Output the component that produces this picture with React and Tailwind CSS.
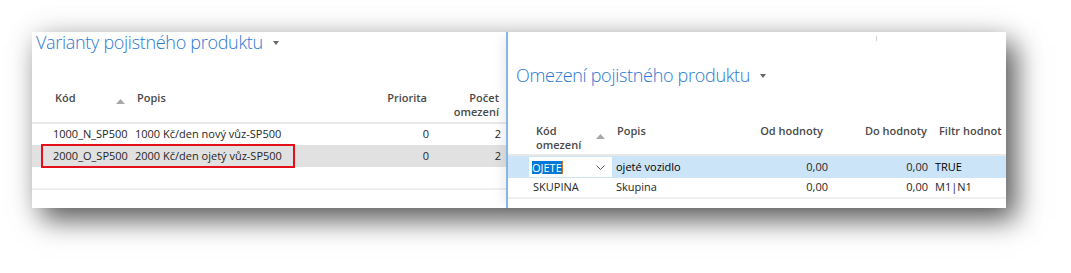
import React from "react";

const TEXT = "font-['Open_Sans','Noto_Sans',sans-serif]";

function Caret() {
  return (
    <svg width="6" height="4" viewBox="0 0 6 4" className="ml-[10px] mt-[2px]">
      <path d="M0 0 L6 0 L3 4 Z" fill="#666" />
    </svg>
  );
}

function SortUp() {
  return (
    <svg width="9" height="5" viewBox="0 0 9 5">
      <path d="M0 5 L4.5 0 L9 5 Z" fill="#a8a8a8" />
    </svg>
  );
}

function Chevron() {
  return (
    <svg width="9" height="5" viewBox="0 0 9 5">
      <path d="M0.5 0.5 L4.5 4.5 L8.5 0.5" fill="none" stroke="#555" strokeWidth="1" />
    </svg>
  );
}

const variants = [
  { code: "1000_N_SP500", desc: "1000 Kč/den nový vůz-SP500", priority: 0, count: 2 },
  { code: "2000_O_SP500", desc: "2000 Kč/den ojetý vůz-SP500", priority: 0, count: 2, selected: true },
];

function VariantsPanel() {
  return (
    <section className="w-[474px] flex flex-col">
      <div className="h-[20px] pl-1 flex items-center">
        <h1 className="text-[18px] leading-[20px] font-light tracking-[-0.3px] text-[#2a79d1]">Varianty pojistného produktu</h1>
        <Caret />
      </div>

      {/* column headings */}
      <div className="mt-[39px] pl-[21px] pb-[3px] flex text-[11px] leading-[14px] font-semibold text-[#4a4a4a] border-b-2 border-[#e8e8e8]">
        <div className="w-[82px] pl-[2px] pr-[10px] flex justify-between">
          <span>Kód</span>
          <span className="mt-[8px]"><SortUp /></span>
        </div>
        <div className="w-[186px] pl-[2px]">Popis</div>
        <div className="w-[108px] pr-[2px] text-right">Priorita</div>
        <div className="w-[72px] pr-[2px] text-right">
          Počet<br />omezení
        </div>
      </div>

      {variants.map((v, i) => (
        <div
          key={v.code}
          className={
            "pl-[21px] flex items-center text-[11px] text-[#262626] " +
            (i === 0 ? "h-[21px] " : "h-[22px] ") +
            (v.selected ? "bg-[#e1e1e1]" : "bg-white")
          }
        >
          <div className="w-[82px]">{v.code}</div>
          <div className="w-[186px]">{v.desc}</div>
          <div className="w-[108px] text-right">{v.priority}</div>
          <div className="w-[72px] text-right">{v.count}</div>
        </div>
      ))}
      <div className="h-[23px] border-b-2 border-[#efefef]" />
    </section>
  );
}

function LimitsPanel() {
  return (
    <section className="relative flex-1 flex flex-col bg-white border-l-2 border-[#86b6e4] shadow-[-8px_0_10px_-4px_rgba(0,0,0,0.07)]">
      <span className="absolute left-[368px] top-[4px] w-px h-[5px] bg-[#cfcfcf]" />
      <div className="mt-[33px] h-[20px] pl-2 flex items-center">
        <h2 className="text-[18px] leading-[20px] font-light tracking-[-0.3px] text-[#2a79d1]">Omezení pojistného produktu</h2>
        <Caret />
      </div>

      <div className="mt-[39px] pl-[21px] pb-[2px] flex text-[11px] leading-[14px] font-semibold text-[#4a4a4a] border-b-2 border-[#e8e8e8]">
        <div className="w-[83px] pl-[7px] pr-[7px] flex justify-between">
          <span>
            Kód<br />omezení
          </span>
          <span className="mt-[10px]"><SortUp /></span>
        </div>
        <div className="w-[140px] pl-[5px]">Popis</div>
        <div className="w-[76px] pr-[5px] text-right">Od hodnoty</div>
        <div className="w-[100px] pr-px text-right">Do hodnoty</div>
        <div className="flex-1 pl-[11px]">Filtr hodnot</div>
      </div>

      <div className="h-[22px] pl-[21px] flex items-center text-[11px] text-[#262626] bg-[#cce4f7]">
        <div className="w-[83px] h-[20px] pl-[3px] pr-[7px] bg-white flex items-center justify-between">
          <span className="flex items-center">
            <span className="bg-[#0078d7] text-white leading-[13px]">OJETE</span>
            <span className="w-px h-[13px] bg-[#c8782e]" />
          </span>
          <Chevron />
        </div>
        <div className="w-[140px] pl-[4px] font-medium text-black">ojeté vozidlo</div>
        <div className="w-[76px] text-right">0,00</div>
        <div className="w-[100px] text-right">0,00</div>
        <div className="flex-1 pl-[7px] font-medium text-black">TRUE</div>
      </div>
      <div className="h-[21px] pl-[21px] flex items-center text-[11px] text-[#262626] border-b-2 border-[#efefef]">
        <div className="w-[83px] pl-[4px]">SKUPINA</div>
        <div className="w-[140px] pl-[4px]">Skupina</div>
        <div className="w-[76px] text-right">0,00</div>
        <div className="w-[100px] text-right">0,00</div>
        <div className="flex-1 pl-[7px]">M1|N1</div>
      </div>
    </section>
  );
}

export default function App() {
  return (
    <div className={"w-[1071px] h-[273px] bg-white pt-8 pl-8 " + TEXT}>
      <div className="relative flex w-[974px] h-[176px] bg-white shadow-[10px_12px_26px_rgba(0,0,0,0.62),0_0_28px_rgba(0,0,0,0.1)]">
        <VariantsPanel />
        <LimitsPanel />
        {/* annotation around the selected variant */}
        <div className="absolute left-[9px] top-[112px] w-[254px] h-[24px] border-2 border-[#e3101c]" />
      </div>
    </div>
  );
}
